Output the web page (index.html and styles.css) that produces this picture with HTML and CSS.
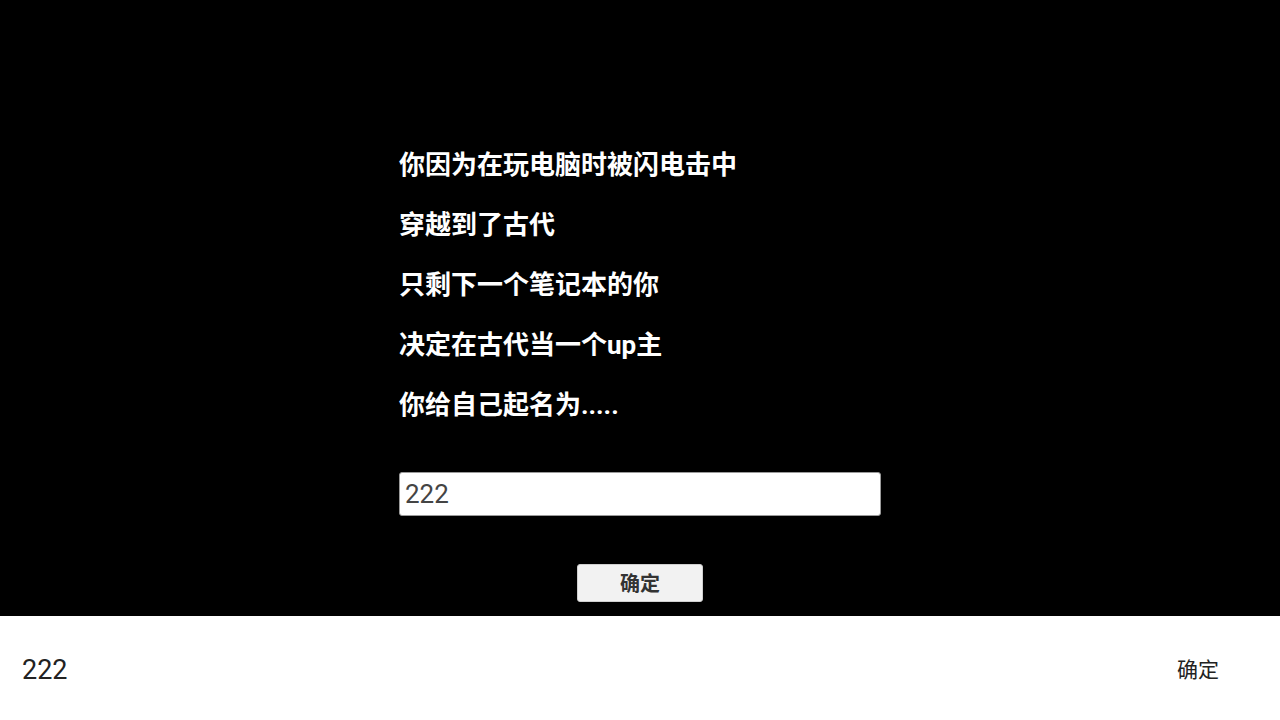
FILE: index.html
```html
<!DOCTYPE html>
<html lang="zh">
<head>
<meta charset="utf-8">
<link rel="stylesheet" href="styles.css">
</head>
<body>
<main class="stage">
  <div class="column">
    <p class="line">你因为在玩电脑时被闪电击中</p>
    <p class="line">穿越到了古代</p>
    <p class="line">只剩下一个笔记本的你</p>
    <p class="line">决定在古代当一个up主</p>
    <p class="line">你给自己起名为.....</p>
    <input class="name" type="text" value="222">
    <div class="btnrow"><button class="ok">确定</button></div>
  </div>
</main>
<footer class="bar">
  <span class="bar-name">222</span>
  <span class="bar-ok">确定</span>
</footer>
</body>
</html>
```
FILE: styles.css
```css
html, body {
  margin: 0;
  padding: 0;
}
body {
  width: 1280px;
  height: 720px;
  overflow: hidden;
  font-family: "Noto Sans CJK SC", "Noto Sans", sans-serif;
}
.stage {
  background: #000;
  height: 616px;
  box-sizing: border-box;
  padding-top: 135px;
  display: flex;
  justify-content: center;
}
.column {
  width: 482px;
  display: flex;
  flex-direction: column;
}
.line {
  margin: 0;
  color: #fff;
  font-family: Roboto, "Noto Sans CJK SC", sans-serif;
  font-weight: 700;
  font-size: 26px;
  line-height: 60px;
  height: 60px;
  white-space: nowrap;
}
.name {
  margin-top: 37px;
  width: 482px;
  height: 44px;
  box-sizing: border-box;
  border: 1px solid #9a9a9a;
  border-radius: 3px;
  padding: 0 5px;
  font-family: Roboto, "Liberation Sans", sans-serif;
  font-size: 26px;
  color: #444;
  background: #fff;
  outline: none;
}
.btnrow {
  margin-top: 48px;
  display: flex;
  justify-content: center;
}
.ok {
  width: 126px;
  height: 38px;
  background: #f2f2f2;
  border: 1px solid #cfcfcf;
  border-radius: 3px;
  font-family: "Noto Sans CJK SC", sans-serif;
  font-weight: 700;
  font-size: 20px;
  color: #333;
  padding: 0;
  line-height: 36px;
}
.bar {
  height: 104px;
  box-sizing: border-box;
  padding: 3px 61px 0 22px;
  background: #fff;
  display: flex;
  align-items: center;
  justify-content: space-between;
}
.bar-name {
  font-family: Roboto, "Noto Sans", sans-serif;
  font-size: 27px;
  color: #222;
}
.bar-ok {
  font-family: "Noto Sans CJK SC", sans-serif;
  font-size: 21px;
  color: #222;
  margin-bottom: 4px;
}
```
